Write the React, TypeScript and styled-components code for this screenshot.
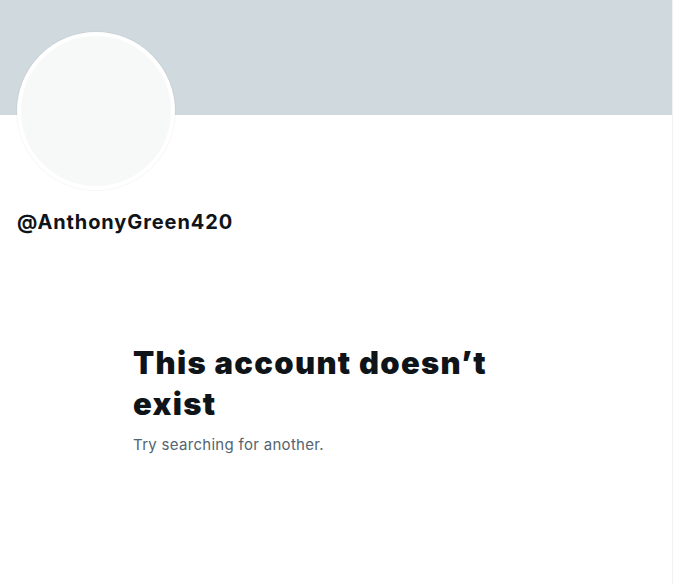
import React from "react";
import styled, { createGlobalStyle } from "styled-components";

const Global = createGlobalStyle`
  html, body { margin: 0; padding: 0; background: #ffffff; }
  body { font-family: Inter, "Noto Sans", "Liberation Sans", sans-serif; }
`;

const Page = styled.div`
  width: 672px;
  min-height: 584px;
  border-right: 1px solid #eff3f4;
  display: flex;
  flex-direction: column;
`;

const Banner = styled.div`
  height: 115px;
  background: #cfd9de;
`;

const ProfileHeader = styled.div`
  padding: 0 17px;
  display: flex;
  flex-direction: column;
  align-items: flex-start;
`;

const Avatar = styled.div`
  width: 150px;
  height: 150px;
  margin-top: -83px;
  border-radius: 50%;
  border: 4px solid #ffffff;
  background: #f7f9f9;
  box-shadow: 0 0 0 1px rgba(0, 0, 0, 0.03);
`;

const Handle = styled.div`
  margin-top: 20px;
  font-size: 20px;
  line-height: 24px;
  font-weight: 700;
  color: #0f1419;
  letter-spacing: 0.9px;
`;

const Empty = styled.div`
  margin: 108px 0 0 133px;
  width: 380px;
  display: flex;
  flex-direction: column;
`;

const Title = styled.h1`
  margin: 0;
  font-size: 31px;
  line-height: 41px;
  font-weight: 900;
  color: #0f1419;
  letter-spacing: 1.3px;
`;

const Sub = styled.p`
  margin: 11px 0 0;
  font-size: 15px;
  line-height: 20px;
  color: #536471;
  letter-spacing: 0.3px;
`;

export default function App() {
  return (
    <>
      <Global />
      <Page>
        <Banner />
        <ProfileHeader>
          <Avatar />
          <Handle>@AnthonyGreen420</Handle>
        </ProfileHeader>
        <Empty>
          <Title>This account doesn’t exist</Title>
          <Sub>Try searching for another.</Sub>
        </Empty>
      </Page>
    </>
  );
}
